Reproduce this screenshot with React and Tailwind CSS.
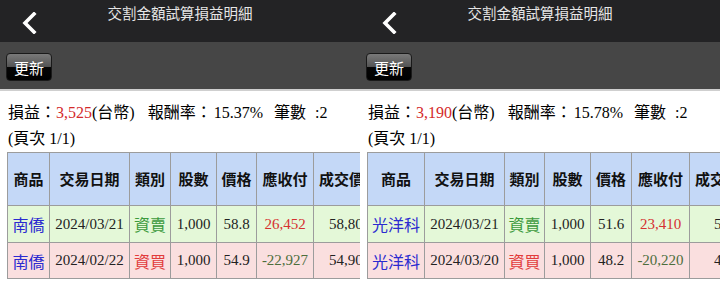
import React from "react";

const serif = "font-['Liberation_Serif','Noto_Sans_CJK_TC',serif]";
const sans = "font-['Noto_Sans_CJK_TC','Noto_Sans',sans-serif]";

const panels = [
  {
    pl: "3,525",
    rate: "15.37%",
    cols: [42, 80, 41, 46, 40, 57, 70, 60],
    dealPad: "pl-[15px]",
    rows: [
      { name: "南僑", date: "2024/03/21", type: "資賣", qty: "1,000", price: "58.8", amt: "26,452", deal: "58,800", bg: "bg-[#e4f8d8]" },
      { name: "南僑", date: "2024/02/22", type: "資買", qty: "1,000", price: "54.9", amt: "-22,927", deal: "54,900", bg: "bg-[#fadfdf]" },
    ],
  },
  {
    pl: "3,190",
    rate: "15.78%",
    cols: [57, 80, 40, 46, 41, 58, 75, 60],
    dealPad: "pl-[24px]",
    rows: [
      { name: "光洋科", date: "2024/03/21", type: "資賣", qty: "1,000", price: "51.6", amt: "23,410", deal: "51,600", bg: "bg-[#e4f8d8]" },
      { name: "光洋科", date: "2024/03/20", type: "資買", qty: "1,000", price: "48.2", amt: "-20,220", deal: "48,200", bg: "bg-[#fadfdf]" },
    ],
  },
];

const heads = ["商品", "交易日期", "類別", "股數", "價格", "應收付", "成交價", "手續費"];

function Panel({ p }) {
  const total = p.cols.reduce((a, b) => a + b, 0);
  const cell = "border border-[#9c9c9c] whitespace-nowrap overflow-hidden";
  return (
    <div className="w-[360px] h-[302px] overflow-hidden bg-white flex flex-col">
      <div className="h-[42px] bg-[#232325] relative shrink-0">
        <svg className="absolute left-[21px] top-[12px]" width="16" height="22" viewBox="0 0 16 22">
          <polyline points="13,2 4,11 13,20" fill="none" stroke="#ffffff" strokeWidth="3.6" strokeLinecap="square" strokeLinejoin="miter" />
        </svg>
        <div className={`${sans} text-center text-[14.5px] leading-[16px] pt-[5px] text-[#e6e6e6]`}>交割金額試算損益明細</div>
      </div>
      <div className="h-[47px] bg-[#464646] shrink-0 flex items-center pl-[6px] pt-[3px]">
        <div className="w-[46px] h-[28px] rounded-[4px] border border-[#1a1a1a] overflow-hidden bg-[linear-gradient(to_bottom,#7a7a7a_0%,#555555_48%,#050505_52%,#000000_100%)] flex items-center justify-center">
          <span className={`${sans} text-white text-[15px] leading-none`}>更新</span>
        </div>
      </div>
      <div className="h-[2px] bg-[#cfcfcf] shrink-0" />
      <div className={`${serif} text-[16px] leading-[26px] text-black pl-[8px] pt-[9px] whitespace-nowrap`}>
        <div>
          損益：<span className="text-[#d42a2a]">{p.pl}</span>(台幣)<span className="ml-[13px]">報酬率：</span>
          <span className="ml-[2px]">{p.rate}</span>
          <span className="ml-[11px]">筆數</span>
          <span className="ml-[9px]">:2</span>
        </div>
        <div>(頁次 1/1)</div>
      </div>
      <div className="pl-[7px]">
        <table className="table-fixed border-collapse" style={{ width: total }}>
          <colgroup>
            {p.cols.map((w, i) => (
              <col key={i} style={{ width: w }} />
            ))}
          </colgroup>
          <thead>
            <tr className="h-[53px] bg-[#c4d8f7]">
              {heads.map((h, i) => (
                <th key={h} className={`${sans} ${cell} text-[15px] font-bold text-[#111] ${i >= 6 ? "text-left pl-[5px]" : "text-center"}`}>
                  {h}
                </th>
              ))}
            </tr>
          </thead>
          <tbody>
            {p.rows.map((r, i) => (
              <tr key={i} className={`${r.bg} ${i === 0 ? "h-[37px]" : "h-[36px]"}`}>
                <td className={`${sans} ${cell} text-[16px] text-[#2b2bd0] text-center`}>{r.name}</td>
                <td className={`${serif} ${cell} text-[15px] text-[#222] text-center`}>{r.date}</td>
                <td className={`${sans} ${cell} text-[16px] text-center ${r.type === "資賣" ? "text-[#3c9a3c]" : "text-[#e23c3c]"}`}>{r.type}</td>
                <td className={`${serif} ${cell} text-[15px] text-[#222] text-center`}>{r.qty}</td>
                <td className={`${serif} ${cell} text-[15px] text-[#222] text-center`}>{r.price}</td>
                <td className={`${serif} ${cell} text-[15px] text-center ${r.amt.startsWith("-") ? "text-[#4c6e3c]" : "text-[#d63030]"}`}>{r.amt}</td>
                <td className={`${serif} ${cell} text-[15px] text-[#222] text-left ${p.dealPad}`}>{r.deal}</td>
                <td className={`${serif} ${cell} text-[15px] text-[#222] text-center`}>20</td>
              </tr>
            ))}
          </tbody>
        </table>
      </div>
    </div>
  );
}

export default function App() {
  return (
    <div className="w-[720px] h-[302px] flex bg-white overflow-hidden">
      {panels.map((p, i) => (
        <Panel key={i} p={p} />
      ))}
    </div>
  );
}
